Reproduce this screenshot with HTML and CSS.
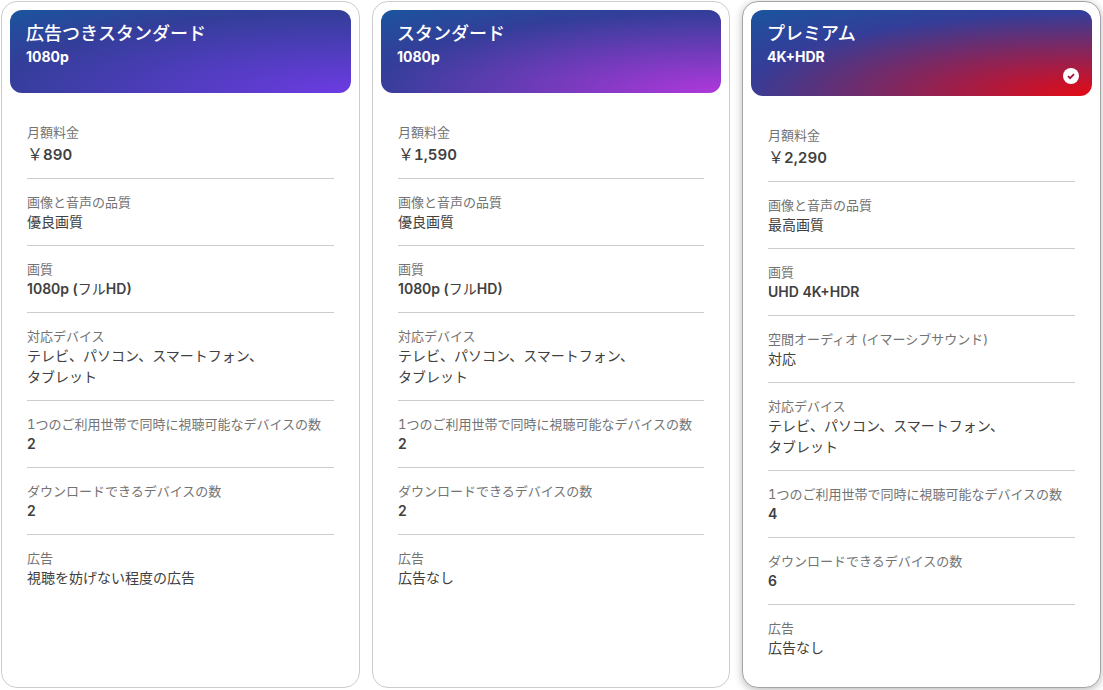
FILE: index.html
```html
<!DOCTYPE html>
<html lang="ja">
<head>
<meta charset="utf-8">
<title>プラン</title>
<link rel="stylesheet" href="styles.css">
</head>
<body>
<main class="plans">
  <section class="card">
    <header class="head head-ads">
      <h2 class="name">広告つきスタンダード</h2>
      <p class="res">1080p</p>
    </header>
    <dl class="list">
      <div class="row row-price"><dt>月額料金</dt><dd class="price">￥<b>890</b></dd></div>
      <div class="row"><dt>画像と音声の品質</dt><dd>優良画質</dd></div>
      <div class="row"><dt>画質</dt><dd><b>1080p (</b>フル<b>HD)</b></dd></div>
      <div class="row"><dt>対応デバイス</dt><dd>テレビ、パソコン、スマートフォン、<br>タブレット</dd></div>
      <div class="row"><dt><span class="tab">1</span>つのご利用世帯で同時に視聴可能なデバイスの数</dt><dd><b>2</b></dd></div>
      <div class="row"><dt>ダウンロードできるデバイスの数</dt><dd><b>2</b></dd></div>
      <div class="row"><dt>広告</dt><dd>視聴を妨げない程度の広告</dd></div>
    </dl>
  </section>
  <section class="card">
    <header class="head head-std">
      <h2 class="name">スタンダード</h2>
      <p class="res">1080p</p>
    </header>
    <dl class="list">
      <div class="row row-price"><dt>月額料金</dt><dd class="price">￥<b>1,590</b></dd></div>
      <div class="row"><dt>画像と音声の品質</dt><dd>優良画質</dd></div>
      <div class="row"><dt>画質</dt><dd><b>1080p (</b>フル<b>HD)</b></dd></div>
      <div class="row"><dt>対応デバイス</dt><dd>テレビ、パソコン、スマートフォン、<br>タブレット</dd></div>
      <div class="row"><dt><span class="tab">1</span>つのご利用世帯で同時に視聴可能なデバイスの数</dt><dd><b>2</b></dd></div>
      <div class="row"><dt>ダウンロードできるデバイスの数</dt><dd><b>2</b></dd></div>
      <div class="row"><dt>広告</dt><dd>広告なし</dd></div>
    </dl>
  </section>
  <section class="card card-selected">
    <header class="head head-premium">
      <h2 class="name">プレミアム</h2>
      <p class="res">4K+HDR</p>
      <svg class="check" width="16" height="16" viewBox="0 0 16 16" aria-hidden="true">
        <circle cx="8" cy="8" r="8" fill="#fff"/>
        <path d="M5 8.2l2.1 2L11 6.2" fill="none" stroke="#a3163c" stroke-width="1.8"/>
      </svg>
    </header>
    <dl class="list">
      <div class="row row-price"><dt>月額料金</dt><dd class="price">￥<b>2,290</b></dd></div>
      <div class="row"><dt>画像と音声の品質</dt><dd>最高画質</dd></div>
      <div class="row"><dt>画質</dt><dd><b>UHD 4K+HDR</b></dd></div>
      <div class="row"><dt>空間オーディオ (イマーシブサウンド)</dt><dd>対応</dd></div>
      <div class="row"><dt>対応デバイス</dt><dd>テレビ、パソコン、スマートフォン、<br>タブレット</dd></div>
      <div class="row"><dt><span class="tab">1</span>つのご利用世帯で同時に視聴可能なデバイスの数</dt><dd><b>4</b></dd></div>
      <div class="row"><dt>ダウンロードできるデバイスの数</dt><dd><b>6</b></dd></div>
      <div class="row"><dt>広告</dt><dd>広告なし</dd></div>
    </dl>
  </section>
</main>
</body>
</html>
```

FILE: styles.css
```css
* { box-sizing: border-box; }
html, body { margin: 0; padding: 0; height: 690px; overflow: hidden; background: #fff; }
body { font-family: Inter, "Noto Sans CJK JP", sans-serif; }
.plans {
  display: grid;
  grid-template-columns: 359px 358px 359px;
  gap: 12px;
  padding: 1px 2px 2px 1px;
  height: 690px;
}
.card {
  height: 687px;
  border: 1px solid #ccc;
  border-radius: 16px;
  padding: 8px;
  background: #fff;
}
.card-selected {
  border-color: #a5a5a5;
  box-shadow: 0 2px 8px rgba(0, 0, 0, 0.28);
}
.head {
  position: relative;
  height: 83px;
  border-radius: 12px;
  padding: 13px 16px;
  color: #fff;
}
.head-ads { background: radial-gradient(140.76% 131.96% at 100% 100%, #6d3be3 0%, rgba(74, 42, 150, 0.5) 73.57%, rgba(74, 42, 150, 0) 100%), #1d529d; }
.head-std { background: radial-gradient(140.76% 131.96% at 100% 100%, #b038dc 0%, rgba(74, 42, 150, 0.5) 73.57%, rgba(74, 42, 150, 0) 100%), #1d529d; }
.head-premium { height: 86px; background: radial-gradient(140.76% 131.96% at 100% 100%, #e50914 0%, rgba(74, 42, 150, 0.5) 73.57%, rgba(74, 42, 150, 0) 100%), #1d529d; }
.name { margin: 0; font-size: 18px; line-height: 21px; font-weight: 500; }
.res { margin: 3px 0 0; font-size: 14px; line-height: 20px; font-weight: 700; }
.check { position: absolute; right: 13px; bottom: 12px; }
.list { margin: 0; padding: 15px 17px 0; }
.row { padding: 13px 0 13px; border-bottom: 1px solid #ccc; }
.row-price { padding: 14px 0 11px; }
.row:last-child { border-bottom: 0; }
dt { font-size: 13px; line-height: 20px; color: #737373; font-weight: 400; }
.tab { font-variant-numeric: tabular-nums; }
dd { margin: -1px 0 0; font-size: 14px; line-height: 21px; color: #404040; font-weight: 400; }
dd b { font-weight: 600; }
dd.price { font-size: 16px; line-height: 24px; margin-top: 0; }
dd.price b { font-size: 15px; font-variant-numeric: tabular-nums; }
```
